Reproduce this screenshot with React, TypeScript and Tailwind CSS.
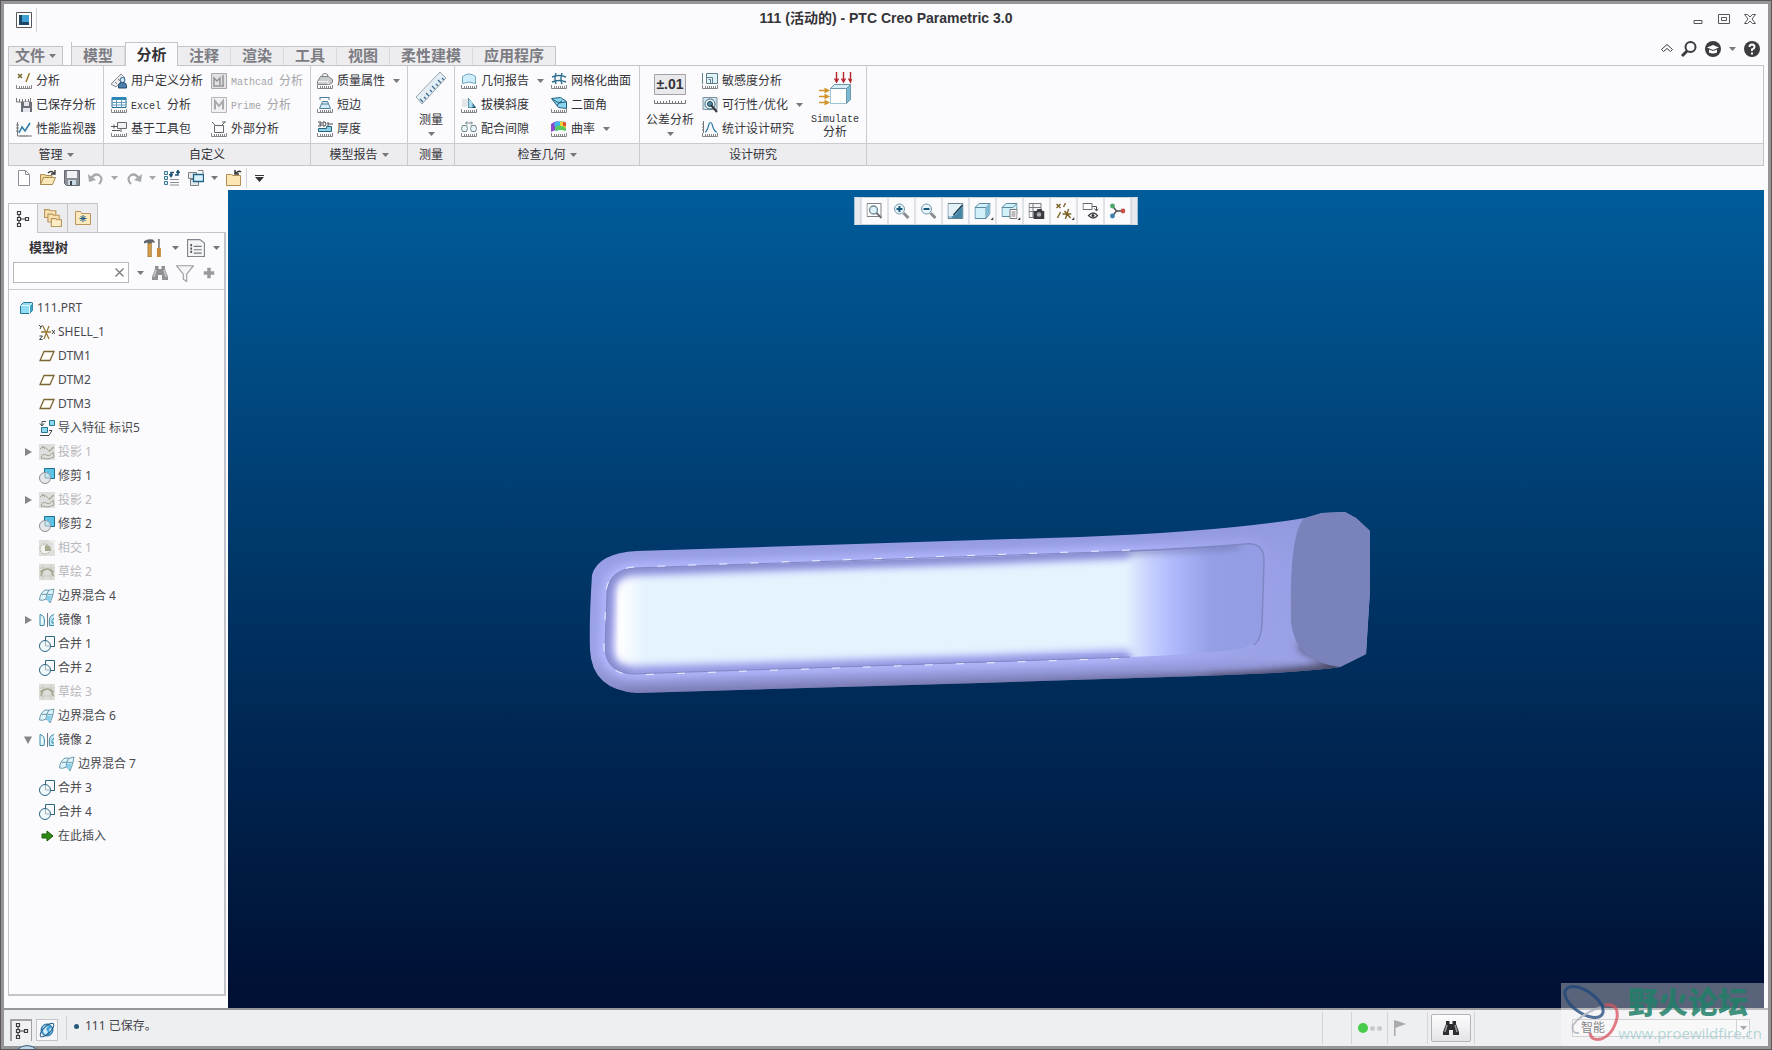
import type { ReactNode } from "react";

const CJK = "font-['Liberation_Sans','Noto_Sans_CJK_SC',sans-serif]";
const TREE_FONT = "font-['Noto_Sans','Noto_Sans_CJK_SC',sans-serif]";

const Arrow = ({ className = "text-[#77777b]" }: { className?: string }) => (
  <svg viewBox="0 0 7 4" className={`w-[7px] h-1 shrink-0 ${className}`} aria-hidden="true">
    <path d="M0 0h7L3.500 4z" fill="currentColor" />
  </svg>
);

const ruler = <path d="M.5 12v3.500h15V12M3.500 13v2.500M5.500 13v2.500M7.500 13v2.500M9.500 13v2.500M11.500 13v2.500M13.500 13v2.500" fill="none" stroke="#85858a" />;

const icons: Record<string, ReactNode> = {
  analysis: (
    <>
      <path d="M2 1l4 4M6 1L2 5" stroke="#7a6a30" strokeWidth="1.500" />
      <path d="M13.500 0l-3.500 9" stroke="#9a7a2a" strokeWidth="1.500" />
      {ruler}
    </>
  ),
  saved: (
    <>
      <path d="M.5 1v4h14V1M3.500 2v3M6.500 2v3M9.500 2v3M12.500 2v3" fill="none" stroke="#77777b" />
      <path d="M5 5h11v10H5z" fill="#6b6e76" />
      <path d="M8 5h5v4H8zM7 11h7v4H7z" fill="#e3e6ea" />
    </>
  ),
  monitor: (
    <>
      <path d="M1.500 1v14H16M0 4h3M0 7h3M0 10h3M5 14v2M8 14v2M11 14v2" fill="none" stroke="#77777b" />
      <path d="M3 12l3-6 3 4 5-8" fill="none" stroke="#2a7ba8" strokeWidth="1.500" />
    </>
  ),
  userDef: (
    <>
      <path d="M0 11L10 1l4 4-9 9z" fill="#e8eaee" stroke="#8a8d94" />
      <path d="M4 9l2 2M7 6l2 2" stroke="#8a8d94" />
      <circle cx="11.500" cy="7" r="2.500" fill="#cfe6f4" stroke="#31648c" />
      <path d="M7.500 15v-2.500q0-3 4-3t4 3V15z" fill="#4a7fb0" stroke="#24486c" />
    </>
  ),
  excel: (
    <>
      <path d="M1 .5h14v10H1z" fill="#fff" stroke="#23688f" />
      <path d="M1 0h14v3H1z" fill="#2d86b8" />
      <path d="M1 5.500h14M1 8h14M5.500 2v9M10.500 2v9" stroke="#5d9cc0" />
      {ruler}
    </>
  ),
  toolkit: (
    <>
      <path d="M6.500 1.500h9v6h-9z" fill="#eef0f3" stroke="#66686e" />
      <path d="M0 5.500h6M3 3.500v4M1 9.500h8M10 8v3" stroke="#55575c" />
      {ruler}
    </>
  ),
  mathcad: (
    <>
      <path d="M.5.500h15v15H.500z" fill="#e2e2e4" stroke="#a8a8ac" />
      <path d="M3 12V5l3 3 3-3v7M12 2v11M2 13h11" fill="none" stroke="#929298" strokeWidth="1.500" />
    </>
  ),
  prime: (
    <>
      <path d="M.5.500h15v15H.500z" fill="#f1f1f3" stroke="#b8b8bc" />
      <path d="M4 12.500V4l4 5 4-5v8.500" fill="none" stroke="#a8a8ae" strokeWidth="2" />
    </>
  ),
  external: (
    <>
      <path d="M3.500 4.500h9v7h-9zM1 1l4 4M10 5l4-4M11 1h4" fill="none" stroke="#66686e" />
      {ruler}
    </>
  ),
  mass: (
    <>
      <path d="M3.500 3.500h8l4 3v3l-3 2h-12v-3z" fill="#c9cccf" stroke="#7d8084" />
      <path d="M5 3.500Q5 .5 8 .5t3 3" fill="none" stroke="#7d8084" />
      <path d="M1 8.500h10v3" fill="none" stroke="#f3f4f5" />
      {ruler}
    </>
  ),
  shortEdge: (
    <>
      <path d="M3 .5h9M3 0v3M12 0v3M5.500 4.500h5l3 7h-11z" fill="#d4ecf6" stroke="#4d7f9a" />
      <path d="M5 7h6" stroke="#4d7f9a" />
      {ruler}
    </>
  ),
  thickness: (
    <>
      <path d="M1 1h3v4H1M2 3h2M6 1h2l1 2-1 2H6zM11 3h5M11 1v4" fill="none" stroke="#44464c" />
      <path d="M1.500 7.500h8V5.500h5v5h-13z" fill="#8fd0e6" stroke="#27647e" />
      {ruler}
    </>
  ),
  geomReport: (
    <>
      <path d="M1.500 3.500Q8-1.500 14.500 3.500v7q-6.500-3-13 0z" fill="#cdeefa" stroke="#6fa6be" />
      {ruler}
    </>
  ),
  draft: (
    <>
      <path d="M1 2h6v8H1z" fill="#e4e7ea" />
      <path d="M7.500 1.500v9h7z" fill="#3f96bc" stroke="#1f4e68" />
      <path d="M7.500 1.500l4 4v5h-4z" fill="#a8dcee" />
      {ruler}
    </>
  ),
  clearance: (
    <>
      <path d="M1.500 4.500h4q2 3 0 6h-4q-2-3 0-6zM10.500 4.500h4q2 3 0 6h-4q-2-3 0-6zM5 2h6M6 .5L4.500 2 6 3.500M10 .5L11.500 2 10 3.500" fill="#e8f4f8" stroke="#71898f" />
      {ruler}
    </>
  ),
  meshSurf: (
    <>
      <path d="M1 4q7-3 14 0M1 9q7-3 14 0M5 0q-2 6 0 11M11 0q-2 6 0 11" fill="none" stroke="#2a6c8c" strokeWidth="1.400" />
      {ruler}
    </>
  ),
  dihedral: (
    <>
      <path d="M.5 1.500l9-1 6 4v7l-8-1z" fill="#8ad3ee" stroke="#23627e" />
      <path d="M1 2l7 4 7-1M6 9q1-4 5-5" fill="none" stroke="#23627e" />
      {ruler}
    </>
  ),
  curvature: (
    <>
      <path d="M0 3q5-4 9-2v8q-4-1-9 2z" fill="#8a48d0" />
      <path d="M3 2q4-3 12-1v8q-6-1-10 1z" fill="#40b8e8" />
      <path d="M9 .5q3-.500 6 1v6q-3-1-6 0z" fill="#f0d030" />
      <path d="M12 1l3 .5v4l-3-1z" fill="#e04a30" />
      <path d="M4 6q5-3 11 1v3q-6-2-11 0z" fill="#58c860" />
      {ruler}
    </>
  ),
  sensitivity: (
    <>
      <path d="M.5 0v11M4.500.500h11v10h-11z" fill="#dff2f8" stroke="#5f7f8c" />
      <path d="M4.500 4.500h6v6M6.500 6.500h2v4" fill="none" stroke="#5f7f8c" />
      {ruler}
    </>
  ),
  feasibility: (
    <>
      <path d="M1 .5h14v12H1z" fill="#cfe4ee" stroke="#8094a0" />
      <circle cx="8" cy="7" r="5" fill="#f0f8fb" stroke="#456c80" />
      <circle cx="8" cy="7" r="2.500" fill="#4f8aa4" stroke="#234a5c" />
      <path d="M9 8l6 7" stroke="#33363c" strokeWidth="2" />
    </>
  ),
  statistic: (
    <>
      <path d="M1.500 0v12M0 3h2M0 6h2M0 9h2" stroke="#77777b" />
      <path d="M3 11q2 0 4-8 1.500-3 3 0 2 8 5 8" fill="none" stroke="#2d7fa8" strokeWidth="1.200" />
      {ruler}
    </>
  ),
  newDoc: <path d="M2.500.500h7l4 4v11h-11zM9.500.500v4h4" fill="#fff" stroke="#8b8e94" />,
  open: (
    <>
      <path d="M.5 14.500v-10h4l1.500 1h6v3" fill="#f2d896" stroke="#a98a52" />
      <path d="M.5 14.500l3-7h12l-3 7z" fill="#fae8b8" stroke="#a98a52" />
      <path d="M8 3q3-3 6 0M15 0v4h-4" fill="none" stroke="#333" strokeWidth="1.300" />
    </>
  ),
  save: (
    <>
      <path d="M.5.500h15v15H2.500l-2-2z" fill="#8a8d93" stroke="#65686e" />
      <path d="M3 1h10v7H3z" fill="#f1f2f4" />
      <path d="M4 10h8v5H4z" fill="#c8dde8" />
      <path d="M6 11h2v4H6z" fill="#44474d" />
    </>
  ),
  undo: (
    <>
      <path d="M3 9q3-6 8-4 5 4 0 9" fill="none" stroke="#a5a8ad" strokeWidth="2.200" />
      <path d="M0 4l1 8 7-2z" fill="#a5a8ad" />
    </>
  ),
  redo: (
    <>
      <path d="M13 9Q10 3 5 5q-5 4 0 9" fill="none" stroke="#a5a8ad" strokeWidth="2.200" />
      <path d="M16 4l-1 8-7-2z" fill="#a5a8ad" />
    </>
  ),
  regen: (
    <>
      <path d="M.5 1.500h3v3h-3zM.5 6.500h3v3h-3zM.5 11.500h3v3h-3z" fill="#d9eef6" stroke="#3d7792" />
      <path d="M6 9.500h9M6 12.500h9M6 15h9" stroke="#8a8d94" />
      <path d="M7 6V2.500h3M14 1v4h-3M5.500 4L7 6.500 8.500 4M12.500 3L14 .5 15.500 3" fill="none" stroke="#1d5270" strokeWidth="1.500" />
    </>
  ),
  windows: (
    <>
      <path d="M.5 2.500h8v6h-8zM2.500 9.500h8v6h-8z" fill="#e5e8eb" stroke="#7c8087" />
      <path d="M5.500 4.500h10v7h-10z" fill="#d8f1fa" stroke="#1f6486" strokeWidth="1.300" />
      <path d="M10 .5h5v3" fill="none" stroke="#7c8087" />
    </>
  ),
  closeWin: (
    <>
      <path d="M.5 15.500v-11h5l1.500 1h7.500v10z" fill="#fbe6b4" stroke="#b08e55" />
      <path d="M10 3q3-3 5-1M9 0v4h4" fill="none" stroke="#333" strokeWidth="1.500" />
    </>
  ),
  treeTab: <path d="M2.500.500h3v3h-3zM2.500 6.500h3v3h-3zM2.500 12.500h3v3h-3zM10.500 6.500h3v3h-3zM4 4v2M4 10v2M6 8h4" fill="none" stroke="#3a3c40" strokeWidth="1.200" />,
  folders: (
    <>
      <path d="M.5 7.500v-7h4l1 1h5v6z" fill="#f8e3b0" stroke="#b8965c" />
      <path d="M3.500 11.500v-7h4l1 1h5v6z" fill="#f8e3b0" stroke="#b8965c" />
      <path d="M6.500 15.500v-7h4l1 1h4v6z" fill="#fdeec6" stroke="#b8965c" />
    </>
  ),
  favorite: (
    <>
      <path d="M.5 14.500v-13h5l1 2h9v11z" fill="#fbe8bc" stroke="#b8965c" />
      <path d="M8 5v7M4.500 8.500h7M5.500 6l5 5M10.500 6l-5 5" stroke="#1e5a80" />
    </>
  ),
  tools: (
    <>
      <path d="M0 2q3-2.500 8-1.500l2 2.500H7v1H3V3L0 4z" fill="#60646c" />
      <path d="M3.500 4h3v12h-3z" fill="#dba04a" stroke="#8c6428" strokeWidth=".6" />
      <path d="M12.500 0h1.500v8h-1.500z" fill="#777a80" />
      <path d="M11.500 8h3.500v8h-3.500z" fill="#c88a3c" />
    </>
  ),
  listDoc: (
    <>
      <path d="M.5.500h11l4 3v12H.500z" fill="#f4f5f7" stroke="#82858b" />
      <path d="M6 6.500h7M6 9.500h7M6 12.500h7" stroke="#777a80" />
      <path d="M3 5.500h1.500M3 8.500h1.500M3 11.500h1.500" stroke="#555" strokeWidth="2" />
    </>
  ),
  binoc: (
    <>
      <path d="M3 1h3.500v3h3V1H13v3l3 8v3h-6v-5H6v5H0v-3l3-8z" fill="currentColor" />
      <path d="M4 5l-2 7M12 5l2 7" stroke="#fff" opacity=".5" strokeWidth="1.500" />
    </>
  ),
  filter: <path d="M.5 1.500h15L9.500 9v6.500l-3-2V9z" fill="#f5f5f7" stroke="#9a9ca0" />,
  plus: <path d="M8 2v12M2 8h12" stroke="#9a9a9e" strokeWidth="4" />,
  part: (
    <>
      <path d="M2.500 5.500l3-3h9v8l-3 3h-9z" fill="#8edcf5" stroke="#2a7592" />
      <path d="M2.500 5.500h9v8M11.500 5.500l3-3" fill="none" stroke="#eafaff" />
      <path d="M12 6l2.500-2.500v7L12 13z" fill="#3d9fc6" />
    </>
  ),
  csys: (
    <>
      <path d="M4 2l6 13M10 2L5 15M2 8h10" stroke="#9a7b36" strokeWidth="1.300" fill="none" />
      <path d="M0 1l2 2 1.500-2M2 3L1 5M.5 12h3l-3 3.500h3M13 6l3 4M16 6l-3 4" stroke="#44464a" fill="none" />
    </>
  ),
  datum: <path d="M5 3.500h10L11 12.500H1z" fill="#fffdf6" stroke="#7b6534" strokeWidth="1.300" />,
  importFeat: (
    <>
      <path d="M10.500.500h5v5h-5zM2.500 7.500h6v5h-6z" fill="#8ed8ef" stroke="#2a7592" />
      <path d="M7 1.500H3v4M1 3.500l2 2.500 2-2.500M1 15.500h9l3-5h-3" fill="none" stroke="#44464a" />
    </>
  ),
  project: (
    <>
      <path d="M0 0h16v16H0z" fill="#dededc" />
      <path d="M1 5q4-4 7 0t7-2M2 14q1-5 5-3t7-3l1 5-6 2zM3 2l3 3M10 8l4-5" fill="none" stroke="#a3a496" />
    </>
  ),
  trim: (
    <>
      <path d="M5.500.500h10v10h-10z" fill="#5cc2e6" stroke="#1e6f90" />
      <circle cx="6" cy="10" r="5.500" fill="#e6e7ea" stroke="#8c9096" />
      <path d="M6 4.500V10h5.500A5.500 5.500 0 0 0 6 4.500z" fill="#c6e8f4" stroke="#8fa8b4" />
    </>
  ),
  intersect: (
    <>
      <path d="M0 0h16v16H0z" fill="#dededa" />
      <circle cx="6" cy="9" r="5" fill="#f3f3ee" stroke="#a9aa9c" strokeDasharray="2 1" />
      <path d="M6 5q6 0 6 6H6z" fill="#a7a890" />
      <path d="M10 1h5v9" fill="none" stroke="#fff" />
    </>
  ),
  sketch: (
    <>
      <path d="M0 0h16v16H0z" fill="#deded9" />
      <path d="M0 4h16M0 12h16M4 0v16M12 0v16" stroke="#cacac4" />
      <path d="M2 12Q3 5 8 5t6 7M1 8q7-6 14 0" fill="none" stroke="#a5a692" strokeWidth="1.300" />
    </>
  ),
  blend: (
    <>
      <path d="M.5 12Q1 5 6 2q4 1 9-1-1 8-4 14-2-4-4-4-3 2-6.500 1z" fill="#dff4fb" stroke="#6c99ac" />
      <path d="M3 6.500q5-1 11 .5M10 2Q7 6 7 11" fill="none" stroke="#6c99ac" />
      <path d="M8 7.500l5 .5-2.500 6-3-3z" fill="#86d0ea" />
    </>
  ),
  mirror: (
    <>
      <path d="M1 2.500q6 1 4 11H1z" fill="#e9f7fb" stroke="#3a8aa8" />
      <path d="M8.500 1v14" stroke="#77777b" />
      <path d="M15 2.500q-6 1-4.500 11H15M15 6q-3 2-2 5h2" fill="#c3e9f5" stroke="#3a8aa8" />
    </>
  ),
  merge: (
    <>
      <path d="M6.500.500h9v10h-9z" fill="#fbfbfd" stroke="#2a6582" />
      <circle cx="6" cy="10" r="5.500" fill="#f2fafc" stroke="#2a6582" />
      <path d="M6.500 5v5h5" fill="none" stroke="#9ab3bf" />
    </>
  ),
  insert: <path d="M3 6h5V3l6 5-6 5v-3H3z" fill="#2d8a12" stroke="#1b5c0a" />,
  globe: (
    <>
      <circle cx="8" cy="8" r="6" fill="#4aa4dc" stroke="#2a6c9a" />
      <path d="M4 5q3-3 5-1l-2 3 2 3-2 3q-4-3-3-8zM11 6l2 1-1 4-2-2z" fill="#cfeafa" />
      <ellipse cx="8" cy="8" rx="9" ry="3.500" transform="rotate(-45 8 8)" fill="none" stroke="#275a80" />
    </>
  ),
  zoomFit: (
    <>
      <path d="M.5.500h14v13H.500z" fill="#fff" stroke="#7e8186" />
      <circle cx="7" cy="7" r="4" fill="#dff2fa" stroke="#6d8794" strokeWidth="1.300" />
      <path d="M10 10l5 5" stroke="#6d7076" strokeWidth="2" />
    </>
  ),
  zoomIn: (
    <>
      <circle cx="6" cy="6" r="5" fill="#e8f6fc" stroke="#7195a8" />
      <path d="M3 6h6M6 3v6" stroke="#17577e" strokeWidth="2" />
      <path d="M10 10l5 5" stroke="#8a8d92" strokeWidth="3" />
    </>
  ),
  zoomOut: (
    <>
      <circle cx="6" cy="6" r="5" fill="#e8f6fc" stroke="#7195a8" />
      <path d="M3 6h6" stroke="#17577e" strokeWidth="2" />
      <path d="M10 10l5 5" stroke="#8a8d92" strokeWidth="3" />
    </>
  ),
  repaint: (
    <>
      <path d="M.5.500h15v15H.500z" fill="#9cc9de" stroke="#68808c" />
      <path d="M1 1h14L5 13H1z" fill="#e4f1f7" />
      <path d="M15 3v12H4q1-3 4-3z" fill="#4487a6" />
      <path d="M15 2L6 12" stroke="#1f3f50" strokeWidth="1.500" />
    </>
  ),
  display: (
    <>
      <path d="M.5 4.500l4-4h11v10l-4 5h-11z" fill="#d2f0fa" stroke="#5c8a9e" />
      <path d="M.5 4.500h11l4-4M11.500 4.500v11" fill="none" stroke="#5c8a9e" />
      <path d="M12 5l3-4v9l-3 4z" fill="#75b8d2" />
    </>
  ),
  orient: (
    <>
      <path d="M.5 4.500l4-4h11v10l-4 3h-11z" fill="#d2f0fa" stroke="#5c8a9e" />
      <path d="M.5 4.500h11l4-4" fill="none" stroke="#5c8a9e" />
      <path d="M8.500 6.500h7v9h-7z" fill="#fff" stroke="#77777b" />
      <path d="M10 9h4M10 11h4M10 13h4" stroke="#77777b" />
    </>
  ),
  viewMgr: (
    <>
      <path d="M.5.500h12v14H.500zM.5 4.500h12M.5 8.500h12M4.500.500v14" fill="#f3f4f6" stroke="#77797e" />
      <path d="M5 8h3l1-2h4l1 2h2v8H5z" fill="#3a3c42" />
      <circle cx="10.500" cy="11.500" r="2.300" fill="#a8acb2" />
    </>
  ),
  datumDisp: (
    <>
      <path d="M1 1l4 4M5 1L1 5M10 0L8 4M5 9l-3 6M9 8l6 7M13 6l-3 10M7 11h9" fill="none" stroke="#7d6225" strokeWidth="1.400" />
    </>
  ),
  annot: (
    <>
      <path d="M.5.500h9v6h-9z" fill="#fff" stroke="#66696e" />
      <path d="M10 3.500h4v4M12 5.500L14 8l2-2.500" fill="none" stroke="#44474c" />
      <path d="M6 12.500q5-5 9 0-4 5-9 0z" fill="#fff" stroke="#44474c" strokeWidth="1.300" />
      <circle cx="10.500" cy="12.500" r="1.500" fill="#33363a" />
    </>
  ),
  spin: (
    <>
      <path d="M3 3l4 5-4 5M7 8h7" fill="none" stroke="#44474c" strokeWidth="1.300" />
      <circle cx="3" cy="3" r="2.400" fill="#4aa86a" />
      <circle cx="3" cy="13" r="2.400" fill="#3d80b0" />
      <circle cx="13.500" cy="8" r="2.400" fill="#c84f48" />
    </>
  ),
};

const Icon = ({ name, className = "size-4" }: { name: string; className?: string }) => (
  <svg viewBox="0 0 16 16" className={`shrink-0 ${className}`} aria-hidden="true">{icons[name]}</svg>
);

// Latin runs in the ribbon use the narrow fixed-pitch face beside the 12px Chinese glyphs
const Label = ({ text }: { text: string }) => (
  <span className="whitespace-pre">
    {text.split(/([A-Za-z/]+ ?)/).map((part, i) =>
      i % 2 ? <span key={i} className="font-['Liberation_Mono',monospace] text-[10px]">{part}</span> : part
    )}
  </span>
);

type Item = { icon: string; text: string; arrow?: boolean; disabled?: boolean };

const Column = ({ items, className = "" }: { items: Item[]; className?: string }) => (
  <div className={`flex flex-col pt-[3px] ${className}`}>
    {items.map((item) => (
      <button key={item.text} disabled={item.disabled} className="flex h-6 items-center gap-1 disabled:text-[#a4a4a8]">
        <Icon name={item.icon} />
        <Label text={item.text} />
        {item.arrow && <span className="pl-1"><Arrow /></span>}
      </button>
    ))}
  </div>
);

const Group = ({ title, arrow, className, children }: { title: string; arrow?: boolean; className: string; children: ReactNode }) => (
  <section className={`flex flex-col border-r border-[#cbcbcf] shrink-0 ${className}`}>
    <div className="flex h-[77px]">{children}</div>
    <button className="flex h-[22px] items-center justify-center gap-1 border-t border-[#cbcbcf] bg-[#ededf0]">
      {title}
      {arrow && <Arrow />}
    </button>
  </section>
);

const tabs = ["模型", "分析", "注释", "渲染", "工具", "视图", "柔性建模", "应用程序"];

const TitleBar = () => (
  <header className="relative flex h-7 items-center justify-between pl-3 pr-2.5">
    <div className="flex items-center gap-1 pt-1">
      <svg viewBox="0 0 16 16" className="size-4" aria-hidden="true">
        <path d="M.5.500h15v15H.500z" fill="#fff" stroke="#55575c" />
        <path d="M3 3h10v10H3z" fill="#1c4566" />
        <path d="M6 3h7v7H6z" fill="#3aa0d4" />
      </svg>
      <span className="h-6 w-px bg-[#d4d4d8]"></span>
    </div>
    <h1 className="absolute inset-x-0 text-center text-sm font-bold text-[#333338]">111 (活动的) - PTC Creo Parametric 3.0</h1>
    <div className="relative flex items-center gap-3.5 pr-0.5 pt-0.5 text-[#55555a]">
      <button aria-label="最小化">
        <svg viewBox="0 0 12 12" className="size-3"><path d="M2 7.500h8v3H2z" fill="none" stroke="currentColor" /></svg>
      </button>
      <button aria-label="还原">
        <svg viewBox="0 0 12 12" className="size-3"><path d="M.5 1.500h11v9H.500zM3.500 4.500h5v3h-5z" fill="none" stroke="currentColor" /></svg>
      </button>
      <button aria-label="关闭">
        <svg viewBox="0 0 12 12" className="size-3"><path d="M.5 1.500h3L6 4l2.500-2.500h3L8 6l3.500 4.500h-3L6 8l-2.500 2.500h-3L4 6z" fill="none" stroke="currentColor" /></svg>
      </button>
    </div>
  </header>
);

const TabBar = () => (
  <nav className="flex h-6 items-end px-1 text-[15px] font-bold text-[#7c7c82]">
    <button className="flex h-[19px] w-[55px] items-center justify-center gap-1 border border-b-0 border-[#c4c4c8] bg-[#ededf0]">
      文件
      <Arrow />
    </button>
    <div className="ml-2 flex items-end border-l border-[#c4c4c8]">
      {tabs.map((tab) =>
        tab === "分析" ? (
          <button key={tab} className="relative -mb-px h-6 w-[53px] border border-b-0 border-[#c4c4c8] bg-[#fbfbfd] pt-px leading-5 text-[#333338]">{tab}</button>
        ) : (
          <button key={tab} className={`h-[19px] border-t border-r border-t-[#c4c4c8] border-r-[#dadade] bg-[#ededf0] leading-4 last:border-r-[#c4c4c8] ${tab.length > 2 ? "w-[83px]" : "w-[53px]"}`}>{tab}</button>
        )
      )}
    </div>
    <div className="mb-2 ml-auto flex items-center gap-2 pr-1 text-[#3c3c40]">
      <button aria-label="最小化功能区">
        <svg viewBox="0 0 12 12" className="size-3"><path d="M.5 6.500L6 1.500l5.500 5L9.500 8.500 6 5.500 2.500 8.500z" fill="none" stroke="currentColor" /></svg>
      </button>
      <button aria-label="搜索">
        <svg viewBox="0 0 16 16" className="size-4"><circle cx="9.500" cy="6" r="5" fill="none" stroke="currentColor" strokeWidth="2" /><path d="M6 10l-5 5" stroke="currentColor" strokeWidth="3" /></svg>
      </button>
      <button aria-label="学习" className="flex items-center gap-2">
        <svg viewBox="0 0 16 16" className="size-4"><circle cx="8" cy="8" r="8" fill="currentColor" /><path d="M2 6.500L8 4l6 2.500L8 9z" fill="#fff" /><path d="M4 8.500v3q4 2 8 0v-3L8 10z" fill="#fff" /></svg>
        <Arrow />
      </button>
      <button aria-label="帮助">
        <svg viewBox="0 0 16 16" className="size-4"><circle cx="8" cy="8" r="8" fill="currentColor" /><path d="M5.500 6Q5.500 3.500 8 3.500T10.500 6Q10.500 7.500 8 8.500V10M8 11.500v2" fill="none" stroke="#fff" strokeWidth="2" /></svg>
      </button>
    </div>
  </nav>
);

const Ribbon = () => (
  <div className="mx-1 flex border border-[#c4c4c8] text-xs text-[#333338]">
    <Group title="管理" arrow className="w-[95px]">
      <Column className="pl-[7px]" items={[{ icon: "analysis", text: "分析" }, { icon: "saved", text: "已保存分析" }, { icon: "monitor", text: "性能监视器" }]} />
    </Group>
    <Group title="自定义" className="w-[207px]">
      <Column className="w-[100px] ml-[7px] shrink-0" items={[{ icon: "userDef", text: "用户定义分析" }, { icon: "excel", text: "Excel 分析" }, { icon: "toolkit", text: "基于工具包" }]} />
      <Column items={[{ icon: "mathcad", text: "Mathcad 分析", disabled: true }, { icon: "prime", text: "Prime 分析", disabled: true }, { icon: "external", text: "外部分析" }]} />
    </Group>
    <Group title="模型报告" arrow className="w-[97px]">
      <Column className="pl-1.5" items={[{ icon: "mass", text: "质量属性", arrow: true }, { icon: "shortEdge", text: "短边" }, { icon: "thickness", text: "厚度" }]} />
    </Group>
    <Group title="测量" className="w-[47px]">
      <button className="flex w-full flex-col items-center gap-1 pt-1.5">
        <svg viewBox="0 0 32 32" className="size-8" aria-hidden="true">
          <path d="M1 25L25 0l6 6L7 32z" fill="#e3edf4" stroke="#9aa6ae" />
          <path d="M8 30l-3-3M11 27l-2-2M14 24l-3-3M17 20l-2-2M20 17l-3-3M23 14l-2-2M26 11l-3-3M29 8l-2-2" stroke="#3f6f94" strokeWidth="1.300" />
        </svg>
        <span className="mt-1 leading-4">测量</span>
        <Arrow />
      </button>
    </Group>
    <Group title="检查几何" arrow className="w-[185px]">
      <Column className="w-[90px] ml-1.5 shrink-0" items={[{ icon: "geomReport", text: "几何报告", arrow: true }, { icon: "draft", text: "拔模斜度" }, { icon: "clearance", text: "配合间隙" }]} />
      <Column items={[{ icon: "meshSurf", text: "网格化曲面" }, { icon: "dihedral", text: "二面角" }, { icon: "curvature", text: "曲率", arrow: true }]} />
    </Group>
    <Group title="设计研究" className="w-[227px]">
      <button className="flex w-[60px] shrink-0 flex-col items-center gap-1 pt-2">
        <svg viewBox="0 0 32 30" className="h-[30px] w-8" aria-hidden="true">
          <path d="M.5.500h31v20H.500z" fill="#e9e9ec" stroke="#a2a2a8" />
          <text x="16" y="15" textAnchor="middle" fontFamily="Liberation Sans" fontWeight="bold" fontSize="14" fill="#333338">±.01</text>
          <path d="M.5 26v3.500h31V26M3.500 27v2M6.500 27v2M9.500 27v2M12.500 27v2M15.500 26v3M18.500 27v2M21.500 27v2M24.500 27v2M27.500 27v2" fill="none" stroke="#77777b" />
        </svg>
        <span className="mt-1 leading-4">公差分析</span>
        <Arrow />
      </button>
      <Column className="pl-0.5" items={[{ icon: "sensitivity", text: "敏感度分析" }, { icon: "feasibility", text: "可行性/优化", arrow: true }, { icon: "statistic", text: "统计设计研究" }]} />
      <button className="ml-2 flex flex-col items-center pt-1.5">
        <svg viewBox="0 0 34 34" className="size-[34px]" aria-hidden="true">
          <path d="M12.500 16.500l4-4h16v15l-4 4h-16z" fill="#fff" stroke="#9cc4d4" />
          <path d="M28.500 16.500l4-4v15l-4 4z" fill="#7dbbd2" stroke="#6c97aa" />
          <path d="M12.500 16.500l4-4h16l-4 4z" fill="#d5edf6" stroke="#6c97aa" />
          <path d="M18.500 0v10M25.500 0v10M32.500 0v10M16.500 6.500l2 3.500 2-3.500M23.500 6.500l2 3.500 2-3.500M30.500 6.500l2 3.500 1-3" fill="none" stroke="#b5262c" strokeWidth="1.400" />
          <path d="M1 18.500h9M1 24.500h9M1 30.500h9M6.500 16.500l4 2-4 2M6.500 22.500l4 2-4 2M6.500 28.500l4 2-4 2" fill="none" stroke="#cf942a" strokeWidth="1.400" />
        </svg>
        <span className="mt-1.5 flex flex-col text-center leading-3">
          <Label text="Simulate" />
          分析
        </span>
      </button>
    </Group>
    <div className="flex flex-1 flex-col">
      <div className="h-[77px]"></div>
      <div className="h-[22px] border-t border-[#cbcbcf] bg-[#ededf0]"></div>
    </div>
  </div>
);

const QuickBar = () => (
  <div className="flex h-6 items-center gap-2 pl-3 text-[#77777b]">
    <button aria-label="新建"><Icon name="newDoc" /></button>
    <button aria-label="打开"><Icon name="open" /></button>
    <button aria-label="保存"><Icon name="save" /></button>
    <button aria-label="撤消" className="flex items-center gap-[7px]"><Icon name="undo" /><Arrow className="text-[#a5a8ad]" /></button>
    <button aria-label="重做" className="flex items-center gap-[7px]"><Icon name="redo" /><Arrow className="text-[#a5a8ad]" /></button>
    <button aria-label="重新生成"><Icon name="regen" /></button>
    <button aria-label="窗口" className="flex items-center gap-[7px]"><Icon name="windows" /><Arrow /></button>
    <button aria-label="关闭窗口"><Icon name="closeWin" /></button>
    <span className="-ml-1 h-5 w-px bg-[#d4d4d8]"></span>
    <button aria-label="自定义快速访问工具栏">
      <svg viewBox="0 0 9 7" className="h-[7px] w-[9px]"><path d="M0 0h9v1H0zM0 2h9L4.500 7z" fill="#333338" /></svg>
    </button>
  </div>
);

type Node = { icon: string; text: string; level?: number; toggle?: "open" | "closed"; dim?: boolean };

const nodes: Node[] = [
  { icon: "part", text: "111.PRT", level: 0 },
  { icon: "csys", text: "SHELL_1" },
  { icon: "datum", text: "DTM1" },
  { icon: "datum", text: "DTM2" },
  { icon: "datum", text: "DTM3" },
  { icon: "importFeat", text: "导入特征 标识5" },
  { icon: "project", text: "投影 1", toggle: "closed", dim: true },
  { icon: "trim", text: "修剪 1" },
  { icon: "project", text: "投影 2", toggle: "closed", dim: true },
  { icon: "trim", text: "修剪 2" },
  { icon: "intersect", text: "相交 1", dim: true },
  { icon: "sketch", text: "草绘 2", dim: true },
  { icon: "blend", text: "边界混合 4" },
  { icon: "mirror", text: "镜像 1", toggle: "closed" },
  { icon: "merge", text: "合并 1" },
  { icon: "merge", text: "合并 2" },
  { icon: "sketch", text: "草绘 3", dim: true },
  { icon: "blend", text: "边界混合 6" },
  { icon: "mirror", text: "镜像 2", toggle: "open" },
  { icon: "blend", text: "边界混合 7", level: 2 },
  { icon: "merge", text: "合并 3" },
  { icon: "merge", text: "合并 4" },
  { icon: "insert", text: "在此插入" },
];

const levelPad = ["pl-[9px]", "pl-[15px]", "pl-[50px]"];

const Sidebar = () => (
  <aside className="flex w-56 shrink-0 flex-col pb-3 pl-1 pr-0.5 pt-[13px]">
    <div className="flex">
      <button aria-label="模型树" className="relative -mb-px flex h-[30px] w-[30px] items-center justify-center border border-b-0 border-[#c4c4cc] bg-[#fbfbfd]"><Icon name="treeTab" /></button>
      <button aria-label="文件夹浏览器" className="flex h-[29px] w-[30px] items-center justify-center border border-b-0 border-l-0 border-[#c4c4cc] bg-[#ededf0]"><Icon name="folders" className="size-[18px]" /></button>
      <button aria-label="收藏夹" className="flex h-[29px] w-[30px] items-center justify-center border border-b-0 border-l-0 border-[#c4c4cc] bg-[#ededf0]"><Icon name="favorite" /></button>
    </div>
    <div className="flex min-h-0 flex-1 flex-col border border-b-2 border-r-2 border-[#c4c4cc]">
      <div className="flex h-[29px] items-center gap-2 pl-5 pr-1">
        <h2 className={`flex-1 text-[13px] font-bold text-[#333338] ${TREE_FONT}`}>模型树</h2>
        <button aria-label="设置" className="flex items-center gap-2.5"><Icon name="tools" className="size-[18px]" /><Arrow /></button>
        <button aria-label="显示" className="flex items-center gap-2"><Icon name="listDoc" className="size-[18px]" /><Arrow /></button>
      </div>
      <div className="flex items-center gap-2 pb-1.5 pl-1 pr-1">
        <label className="flex h-[21px] w-[116px] items-center border border-[#b8b8bc] bg-white">
          <input aria-label="搜索模型树" className="w-full min-w-0 px-1 text-xs outline-none" />
          <button aria-label="清除" className="mr-1">
            <svg viewBox="0 0 9 9" className="size-[9px]"><path d="M.5.500l8 8M8.500.500l-8 8" stroke="#77777b" strokeWidth="1.300" /></svg>
          </button>
        </label>
        <button aria-label="搜索选项"><Arrow /></button>
        <button aria-label="查找" className="text-[#909095]"><Icon name="binoc" /></button>
        <button aria-label="过滤"><Icon name="filter" className="size-[18px]" /></button>
        <button aria-label="添加"><Icon name="plus" className="size-3.5" /></button>
      </div>
      <ul className={`flex-1 border-t border-[#cbcbcf] pt-1.5 text-xs text-[#4a4a4e] ${TREE_FONT}`}>
        {nodes.map((node, i) => (
          <li key={i} className={`flex h-6 items-center gap-[3px] ${levelPad[node.level ?? 1]} ${node.dim ? "text-[#b8b8bc]" : ""}`}>
            {node.level === undefined && (
              <span className="flex w-3">
                {node.toggle && (
                  <button aria-label={node.text}>
                    <svg viewBox="0 0 8 8" className="size-2 text-[#85858a]">
                      <path d={node.toggle === "open" ? "M0 .5h8L4 8z" : "M1 0l7 4-7 4z"} fill="currentColor" />
                    </svg>
                  </button>
                )}
              </span>
            )}
            <Icon name={node.icon} />
            {node.text}
          </li>
        ))}
      </ul>
    </div>
  </aside>
);

const OUTER = "M637 551L980 540L1080 537Q1220 532 1305 518L1322 513L1345 512L1356 518L1370 531V590L1366 654L1340 667Q1300 673 1200 676L980 683L637 693Q592 690 590 650Q589 620 592 575Q598 553 637 551Z";
const INNER = "M634 568L980 557L1130 551Q1200 548 1245 544Q1265 542 1264 562L1262 625Q1261 644 1240 649Q1190 655 1130 657L980 663L632 674Q606 672 605 648L607 592Q609 570 634 568Z";

const Model = () => (
  <svg viewBox="228 190 1536 818" preserveAspectRatio="xMidYMid meet" className="absolute inset-0 size-full" role="img" aria-label="111.PRT">
    <defs>
      <linearGradient id="floor" gradientUnits="userSpaceOnUse" x1="605" x2="1264" y1="0" y2="0">
        <stop offset="0" stopColor="#b8bcfa" />
        <stop offset=".02" stopColor="#fff" />
        <stop offset=".035" stopColor="#f6fbff" />
        <stop offset=".06" stopColor="#e5f3fe" />
        <stop offset=".79" stopColor="#e5f3fe" />
        <stop offset=".82" stopColor="#cbd5fe" />
        <stop offset=".86" stopColor="#b0bafc" />
        <stop offset=".92" stopColor="#949fe6" />
        <stop offset="1" stopColor="#949de4" />
      </linearGradient>
      <linearGradient id="body" x1="0" x2="0" y1="0" y2="1">
        <stop offset="0" stopColor="#9298dc" />
        <stop offset=".3" stopColor="#999fe6" />
        <stop offset=".8" stopColor="#9ba1e6" />
        <stop offset="1" stopColor="#8a8cc8" />
      </linearGradient>
      <linearGradient id="under" gradientUnits="userSpaceOnUse" x1="620" x2="1336" y1="0" y2="0">
        <stop offset="0" stopColor="#6c6ca0" stopOpacity=".6" />
        <stop offset=".6" stopColor="#62628e" stopOpacity=".8" />
        <stop offset="1" stopColor="#44445a" />
      </linearGradient>
      <linearGradient id="rim" gradientUnits="userSpaceOnUse" x1="605" x2="1264" y1="0" y2="0">
        <stop offset="0" stopColor="#b4baff" />
        <stop offset=".75" stopColor="#b4baff" />
        <stop offset="1" stopColor="#9ba1e6" />
      </linearGradient>
      <filter id="soft" x="-20%" y="-20%" width="140%" height="140%"><feGaussianBlur stdDeviation="4" /></filter>
      <clipPath id="outerClip"><path d={OUTER} /></clipPath>
      <clipPath id="innerClip"><path d={INNER} /></clipPath>
    </defs>
    <path d={OUTER} fill="url(#body)" />
    <g clipPath="url(#outerClip)">
      <path d={INNER} fill="none" stroke="url(#rim)" strokeWidth="10" filter="url(#soft)" />
      <path d="M620 695L980 685L1200 679Q1290 676 1345 667" fill="none" stroke="url(#under)" strokeWidth="9" filter="url(#soft)" />
      <path d="M1210 681Q1290 678 1345 669L1300 645" fill="none" stroke="#4c4c66" strokeWidth="9" filter="url(#soft)" />
    </g>
    <path d={INNER} fill="url(#floor)" />
    <g clipPath="url(#innerClip)">
      <path d="M1130 551L980 557L634 568Q609 570 607 592L605 648Q606 672 632 674L980 663L1130 657" fill="none" stroke="#9ea2f2" strokeWidth="15" filter="url(#soft)" />
      <path d="M1240 545L1130 551L980 557L634 568Q609 570 607 592L605 648Q606 672 632 674" fill="none" stroke="#7074aa" strokeWidth="5" filter="url(#soft)" />
      <path d="M632 674L980 663L1130 657" fill="none" stroke="#8386c8" strokeWidth="4" filter="url(#soft)" />
      <path d="M621 592Q625 620 619 650" fill="none" stroke="#fff" strokeWidth="7" filter="url(#soft)" />
    </g>
    <path d="M1130 551Q1200 548 1245 544Q1265 542 1264 562L1262 625Q1261 640 1254 645" fill="none" stroke="#8086c4" strokeWidth="1.500" />
    <path d="M1130 551L634 568Q609 570 607 592L605 648Q606 672 632 674L1130 657" fill="none" stroke="#8086c4" strokeWidth="1" />
    <path d="M1130 550L634 567Q608 569 606 592L604 648Q605 673 632 675L1130 658" fill="none" stroke="#eef0ff" strokeWidth="1" strokeDasharray="8 23" />
    <path d="M1305 518L1322 513L1345 512L1356 518L1370 531V590L1366 654L1340 667Q1295 662 1291 622Q1289 530 1305 518Z" fill="#7982ba" />
  </svg>
);

const viewTools = [
  { icon: "zoomFit", label: "重新调整" },
  { icon: "zoomIn", label: "放大" },
  { icon: "zoomOut", label: "缩小" },
  { icon: "repaint", label: "重画" },
  { icon: "display", label: "显示样式", menu: true },
  { icon: "orient", label: "已保存方向", menu: true },
  { icon: "viewMgr", label: "视图管理器" },
  { icon: "datumDisp", label: "基准显示过滤器", menu: true },
  { icon: "annot", label: "注释显示" },
  { icon: "spin", label: "旋转中心" },
];

const Viewport = () => (
  <main className="relative mr-1 min-w-0 flex-1 bg-linear-to-b from-[#005c9b] to-[#000f32]">
    <Model />
    <div className="absolute left-1/2 top-[7px] flex h-7 -translate-x-1/2 border-x-[6px] border-y border-x-[#e6e9ee] border-y-[#c9d3dc] bg-[#c3c9d0]">
      {viewTools.map((tool) => (
        <button key={tool.icon} aria-label={tool.label} className="relative mr-px flex w-[26px] items-center justify-center bg-[#fbfbfd] first:ml-px">
          <Icon name={tool.icon} />
          {tool.menu && (
            <svg viewBox="0 0 3 3" className="absolute bottom-1 right-0.5 size-[3px]"><path d="M3 0v3H0z" fill="#333" /></svg>
          )}
        </button>
      ))}
    </div>
  </main>
);

const StatusBar = () => (
  <footer className="flex h-[38px] shrink-0 items-center border-t-2 border-[#97979a] bg-[#eeeff1] text-xs text-[#44444a]">
    <div className="mt-1 flex items-center gap-1 pl-1.5">
      <button aria-label="显示导航器" className="flex size-[22px] items-center justify-center border-2 border-b-0 border-r border-[#a0a0a6] bg-[#f1f1f3]"><Icon name="treeTab" /></button>
      <button aria-label="显示浏览器" className="flex size-[22px] items-center justify-center border border-[#c4c4c8] bg-[#f8f8fa]"><Icon name="globe" /></button>
    </div>
    <span className="ml-2 h-6 w-px bg-[#d0d0d4]"></span>
    <span className="mb-1 ml-[7px] size-[5px] rounded-full bg-[#245a78]"></span>
    <p className={`mb-1 ml-1.5 flex-1 ${TREE_FONT}`}>111 已保存。</p>
    <div className="flex items-center self-stretch">
      <span className="h-8 w-7.5 border-x border-[#d4d4d8]"></span>
      <span className="flex h-8 w-9 items-center justify-center gap-0.5 border-r border-[#d4d4d8]">
        <span className="size-2.5 rounded-full bg-[#46cc4a]"></span>
        <span className="size-[5px] rounded-full bg-[#cacacd]"></span>
        <span className="size-[5px] rounded-full bg-[#cacacd]"></span>
      </span>
      <span className="flex h-8 w-10 items-center border-r border-[#d4d4d8] pl-1.5">
        <svg viewBox="0 0 12 16" className="h-4 w-3" aria-hidden="true"><path d="M0 0h1.500v16H0zM1 0l11 4-11 4z" fill="#aaaaae" /></svg>
      </span>
      <span className="flex h-8 w-[47px] items-center justify-center border-r border-[#d4d4d8]">
        <button aria-label="查找" className="flex h-7 w-10 items-center justify-center rounded-xs border border-[#b4b4b8] bg-linear-to-b from-[#fdfdfe] to-[#e4e4e8] text-[#2c2c30]"><Icon name="binoc" /></button>
      </span>
      <label className="relative ml-[97px] mr-[18px] flex items-center">
        <select aria-label="选择过滤器" className="h-[18px] w-[178px] appearance-none border border-[#b8b8bc] bg-[#f4f4f6] pl-2 text-xs leading-4">
          <option>智能</option>
        </select>
        <span className="pointer-events-none absolute inset-y-0 right-0 flex w-3.5 items-center justify-center border-l border-[#b8b8bc]"><Arrow /></span>
      </label>
    </div>
  </footer>
);

const Watermark = () => (
  <div className="pointer-events-none absolute bottom-0 right-0 flex h-[63px] w-[207px] justify-end bg-white/35">
    <svg viewBox="0 0 62 63" className="absolute left-0 top-0 h-[63px] w-[62px]" aria-hidden="true">
      <g fill="none" opacity=".75">
        <ellipse cx="23" cy="19" rx="22" ry="11" transform="rotate(35 23 19)" stroke="#1d4679" strokeWidth="3" />
        <path d="M40 24Q20 31 12 42Q10 51 18 50" stroke="#a9adb8" strokeWidth="2" />
        <path d="M44 22Q58 20 56 35Q52 52 40 56Q30 58 29 50" stroke="#d8525e" strokeWidth="3" />
      </g>
    </svg>
    <div className="flex flex-col items-end">
      <span className="mr-5 whitespace-nowrap text-[30px] font-black leading-10 text-[#1f8068]/85">野火论坛</span>
      <span className="mr-1.5 whitespace-nowrap font-['Open_Sans',sans-serif] text-[15px] leading-5 text-[#a3cdd0]/80">www.proewildfire.cn</span>
    </div>
  </div>
);

export default function App() {
  return (
    <div className={`relative flex h-screen flex-col overflow-hidden border border-[#5a5759] bg-[#969496] p-[3px] ${CJK}`}>
      <div className="relative flex min-h-0 flex-1 flex-col bg-[#fbfbfd]">
        <div className="pb-[9px]">
          <TitleBar />
        </div>
        <TabBar />
        <Ribbon />
        <QuickBar />
        <div className="flex min-h-0 flex-1">
          <Sidebar />
          <Viewport />
        </div>
        <StatusBar />
        <Watermark />
      </div>
      <span className="absolute -bottom-6 left-3 size-7 rounded-full border border-[#3c5a74] bg-[#b9d6ea]"></span>
    </div>
  );
}
